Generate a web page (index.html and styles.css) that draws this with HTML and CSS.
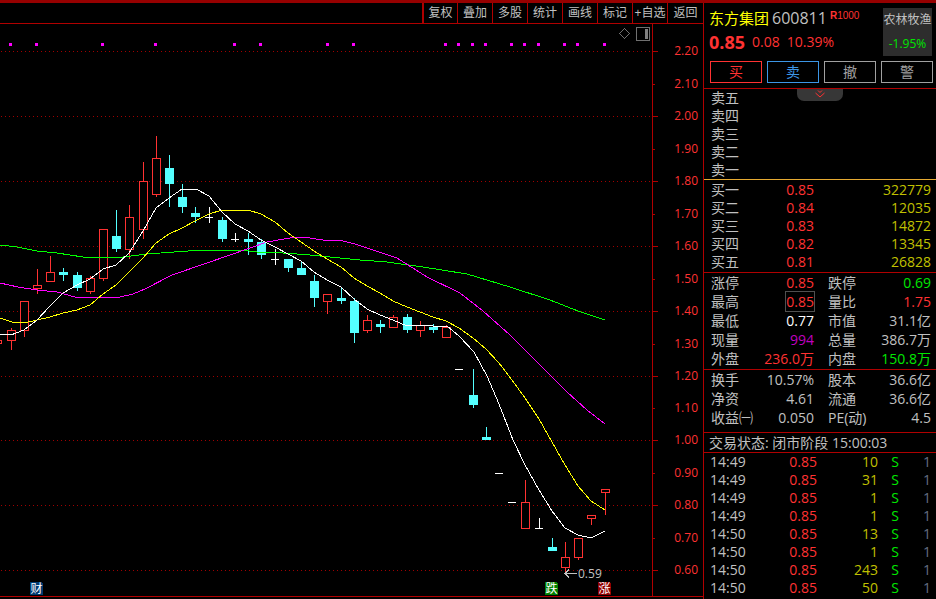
FILE: index.html
```html
<!DOCTYPE html>
<html lang="zh-CN">
<head>
    <meta charset="UTF-8">
    <meta name="viewport" content="width=device-width, initial-scale=1.0">
    <title>东方集团 600811</title>
    <link rel="stylesheet" href="styles.css">
</head>
<body>
    <main class="chart-panel">
        <nav class="toolbar">
            <button type="button">复权</button>
            <button type="button">叠加</button>
            <button type="button">多股</button>
            <button type="button">统计</button>
            <button type="button">画线</button>
            <button type="button">标记</button>
            <button type="button">+自选</button>
            <button type="button">返回</button>
        </nav>

        <svg class="chart" id="chart" viewBox="0 24 703 575" role="img" aria-label="日K线">
            <g id="grid"></g>
            <g id="signals" class="signal"></g>
            <g id="candles"></g>

            <!-- Moving averages -->
            <polyline class="ma ma-green" points="0,245 17,247 37,251 57,253 83,257 123,257 147,254 188,251 210,250 240,250 257,252 283,253 310,255 340,258 360,260 387,262 423,267 467,274 510,287 550,300 578,311 605,320"/>
            <polyline class="ma ma-pink" points="0,283 18,287 37,290 57,292 75,297 120,297 133,294 145,289 172,275 207,263 250,248 267,242 290,238 303,237 323,240 343,241 355,244 397,258 427,277 460,293 483,311 510,335 530,355 543,368 567,392 587,410 605,424"/>
            <polyline class="ma ma-yellow" points="0,318 12,322 24,323 37,320 50,317 63,313 77,310 90,305 103,294 116,285 129,272 143,258 156,243 169,234 182,228 195,221 209,214 222,210 235,211 248,210 261,214 275,222 288,233 301,242 314,251 327,259 341,267 354,278 367,286 380,293 393,301 407,307 420,312 433,317 446,321 459,328 473,338 486,349 499,363 512,380 525,398 539,419 552,442 565,465 578,486 591,501 605,510"/>
            <polyline class="ma ma-white" points="0,334 11,335 24,330 37,320 50,306 63,293 77,285 90,279 103,269 116,265 129,253 143,231 156,208 169,198 182,189 196,189 209,196 222,212 235,224 248,231 261,240 275,247 288,254 301,261 314,272 327,280 341,287 354,299 367,309 380,315 393,320 407,326 420,325 433,326 447,326 459,336 474,352 487,376 499,404 513,440 525,465 539,490 552,511 565,528 578,535 591,538 605,531"/>

            <!-- Axis and frame -->
            <path class="frame" d="M652.5 24V596M0 596.5H703"/>
            <g id="axis" class="axis-label"></g>

            <!-- Corner tools -->
            <path class="tool" d="M624.5 28.5L629.5 33.5L624.5 38.5L619.5 33.5Z"/>
            <rect class="tool" x="636.5" y="27.5" width="13" height="13"/>
            <rect class="tool-bar" x="645" y="29" width="3" height="10"/>

            <!-- Low price mark -->
            <path class="arrow" d="M577 573.5H565M569 569.5L565 573.5L569 577.5"/>
            <text class="low-price" x="578" y="578">0.59</text>

            <!-- Event badges -->
            <g class="badge">
                <path fill="#003a70" d="M30 582h11l2 2v11h-13z"/>
                <path fill="#008000" d="M545 582h11l2 2v11h-13z"/>
                <path fill="#900000" d="M598 582h11l2 2v11h-13z"/>
                <text x="36.5" y="593">财</text>
                <text x="551.5" y="593">跌</text>
                <text x="604.5" y="593">涨</text>
            </g>
        </svg>
    </main>

    <aside class="quote">
        <header class="stock">
            <div class="stock-info">
                <h1><span class="stock-name">东方集团</span> <span class="code">600811</span> <sup><b>R</b>1000</sup></h1>
                <p class="price-line"><strong>0.85</strong><span>0.08</span><span>10.39%</span></p>
            </div>
            <div class="sector">
                <a href="#">农林牧渔</a>
                <span class="down">-1.95%</span>
            </div>
        </header>
        <div class="actions">
            <button type="button" class="buy">买</button>
            <button type="button" class="sell">卖</button>
            <button type="button">撤</button>
            <button type="button">警</button>
        </div>

        <section class="asks">
            <button type="button" class="drawer" aria-label="展开">
                <svg width="10" height="8" viewBox="0 0 10 8"><path d="M3 0.5L5 2.5L7 0.5M0.5 3L5 7L9.5 3"/></svg>
            </button>
            <table class="book">
                <tr><th>卖五</th><td></td><td></td></tr>
                <tr><th>卖四</th><td></td><td></td></tr>
                <tr><th>卖三</th><td></td><td></td></tr>
                <tr><th>卖二</th><td></td><td></td></tr>
                <tr><th>卖一</th><td></td><td></td></tr>
            </table>
        </section>
        <section class="bids">
            <table class="book">
                <tr><th>买一</th><td class="up">0.85</td><td class="vol">322779</td></tr>
                <tr><th>买二</th><td class="up">0.84</td><td class="vol">12035</td></tr>
                <tr><th>买三</th><td class="up">0.83</td><td class="vol">14872</td></tr>
                <tr><th>买四</th><td class="up">0.82</td><td class="vol">13345</td></tr>
                <tr><th>买五</th><td class="up">0.81</td><td class="vol">26828</td></tr>
            </table>
        </section>

        <section class="stats-price">
            <table class="stats">
                <tr><th>涨停</th><td class="up">0.85</td><th>跌停</th><td class="down">0.69</td></tr>
                <tr><th>最高</th><td class="up"><span class="boxed">0.85</span></td><th>量比</th><td class="up">1.75</td></tr>
                <tr><th>最低</th><td class="flat">0.77</td><th>市值</th><td>31.1亿</td></tr>
                <tr><th>现量</th><td class="now">994</td><th>总量</th><td>386.7万</td></tr>
                <tr><th>外盘</th><td class="up">236.0万</td><th>内盘</th><td class="down">150.8万</td></tr>
            </table>
        </section>
        <section class="stats-base">
            <table class="stats">
                <tr><th>换手</th><td>10.57%</td><th>股本</th><td>36.6亿</td></tr>
                <tr><th>净资</th><td>4.61</td><th>流通</th><td>36.6亿</td></tr>
                <tr><th>收益㈠</th><td>0.050</td><th>PE(动)</th><td>4.5</td></tr>
            </table>
        </section>

        <p class="status">交易状态: 闭市阶段 15:00:03</p>

        <table class="tape">
            <tr><th>14:49</th><td class="up">0.85</td><td class="vol">10</td><td class="side">S</td><td class="count">1</td></tr>
            <tr><th>14:49</th><td class="up">0.85</td><td class="vol">31</td><td class="side">S</td><td class="count">1</td></tr>
            <tr><th>14:49</th><td class="up">0.85</td><td class="vol">1</td><td class="side">S</td><td class="count">1</td></tr>
            <tr><th>14:49</th><td class="up">0.85</td><td class="vol">1</td><td class="side">S</td><td class="count">1</td></tr>
            <tr><th>14:50</th><td class="up">0.85</td><td class="vol">13</td><td class="side">S</td><td class="count">1</td></tr>
            <tr><th>14:50</th><td class="up">0.85</td><td class="vol">1</td><td class="side">S</td><td class="count">1</td></tr>
            <tr><th>14:50</th><td class="up">0.85</td><td class="vol">243</td><td class="side">S</td><td class="count">1</td></tr>
            <tr><th>14:50</th><td class="up">0.85</td><td class="vol">50</td><td class="side">S</td><td class="count">1</td></tr>
        </table>
    </aside>

    <script src="chart.js"></script>
</body>
</html>
```
FILE: styles.css
```css
* {
    box-sizing: border-box;
}
body {
    display: flex;
    align-items: stretch;
    min-height: 100vh;
    margin: 0;
    border-top: 3px solid #960000;
    background-color: #000;
    color: #c0c0c0;
    font-family: "Open Sans", "Noto Sans CJK SC", sans-serif;
    font-size: 14px;
    line-height: 18px;
}
button {
    padding: 0;
    background: none;
    color: inherit;
    font: inherit;
    cursor: pointer;
}
h1, p {
    margin: 0;
    font-weight: normal;
}

/* Chart side */
.chart-panel {
    flex: 1;
    min-width: 0;
}
.toolbar {
    display: flex;
    justify-content: flex-end;
    height: 21px;
    border-bottom: 1px solid #b00000;
}
.toolbar button {
    width: 35px;
    border: 0;
    border-right: 1px solid #b00000;
    font-size: 12px;
    line-height: 20px;
    white-space: nowrap;
    overflow: hidden;
}
.toolbar button:first-child {
    width: 36px;
    border-left: 2px solid #b00000;
}
.toolbar button:last-child {
    border-right: 0;
}
.chart {
    display: block;
    width: 100%;
    height: auto;
    shape-rendering: crispEdges;
}
.grid-line {
    stroke: #a00000;
    stroke-dasharray: 1 3;
}
.frame, .tick {
    fill: none;
    stroke: #b00000;
}
.axis-label {
    fill: #ff3232;
    font-size: 12px;
    text-anchor: end;
}
.signal {
    fill: #ff00ff;
}
.red {
    fill: #000;
    stroke: #ff3232;
}
.cyan {
    fill: #54ffff;
    stroke: #54ffff;
}
.white {
    fill: none;
    stroke: #fff;
}
.ma {
    fill: none;
    stroke-width: 1;
}
.ma-white {
    stroke: #fff;
}
.ma-yellow {
    stroke: #ffff00;
}
.ma-pink {
    stroke: #ff00ff;
}
.ma-green {
    stroke: #00ff00;
}
.tool {
    fill: none;
    stroke: #707070;
}
.tool-bar {
    fill: #808080;
}
.arrow {
    fill: none;
    stroke: #c0c0c0;
}
.low-price {
    fill: #c0c0c0;
    font-size: 12px;
}
.badge text {
    fill: #fff;
    font-size: 12px;
    text-anchor: middle;
}

/* Quote side */
.quote {
    flex: none;
    width: 233px;
    border-left: 1px solid #b00000;
}
.up {
    color: #ff3232;
}
.down {
    color: #00e600;
}
.flat {
    color: #fff;
}
.now {
    color: #c000c0;
}
.vol {
    color: #c0c000;
}
.stock {
    display: flex;
    justify-content: space-between;
    padding: 5px 4px 5px 5px;
}
.stock h1 {
    display: flex;
    gap: 3px;
    font-size: 16px;
    line-height: 20px;
}
.stock-name {
    color: #ffff00;
    font-size: 15px;
}
.stock sup {
    color: #ff3232;
    font-family: "Liberation Sans Narrow", "Liberation Sans", sans-serif;
    font-size: 10px;
    line-height: 16px;
    vertical-align: top;
}
.price-line {
    display: flex;
    gap: 7px;
    padding-top: 4px;
    color: #ff3232;
    line-height: 20px;
}
.price-line strong {
    font-size: 18px;
}
.sector {
    display: flex;
    flex-direction: column;
    justify-content: space-between;
    width: 49px;
    height: 48px;
    padding: 3px 0;
    background-color: #2d2d2d;
    font-size: 12px;
    text-align: center;
}
.sector a {
    color: #c0c0c0;
    text-decoration: none;
}
.actions {
    display: flex;
    gap: 5px;
    padding: 0 3px 5px 6px;
    border-bottom: 1px solid #b00000;
}
.actions button {
    flex: 1;
    height: 22px;
    border: 1px solid #a0a0a0;
    color: #a0a0a0;
    line-height: 20px;
}
.actions .buy {
    border-color: #ff3232;
    color: #ff3232;
}
.actions .sell {
    border-color: #3c96e6;
    color: #3c96e6;
}

table {
    width: 100%;
    border-collapse: collapse;
    table-layout: fixed;
}
th, td {
    height: 18px;
    padding: 0;
    font-weight: normal;
    text-align: right;
    white-space: nowrap;
}
th {
    padding-left: 7px;
    text-align: left;
}
td:last-child {
    padding-right: 5px;
}
.asks {
    position: relative;
    border-bottom: 1px solid #e6aa32;
}
.drawer {
    position: absolute;
    top: 0;
    left: 40%;
    display: flex;
    justify-content: center;
    width: 46px;
    height: 12px;
    padding-top: 1px;
    border: 0;
    border-radius: 0 0 7px 7px;
    background-color: #373737;
}
.drawer path {
    fill: none;
    stroke: #ff3232;
}
.bids {
    padding: 1px 0;
    border-bottom: 1px solid #b00000;
}
.book th {
    width: 60px;
}
.book td:nth-child(2) {
    width: 50px;
}
.stats th, .stats td {
    height: 19px;
    line-height: 19px;
}
.stats th:first-child {
    width: 50px;
}
.stats td:nth-child(2) {
    width: 60px;
}
.stats th:nth-child(3) {
    width: 56px;
    padding-left: 14px;
}
.stats-price {
    padding-bottom: 1px;
    border-bottom: 1px solid #b00000;
}
.stats-base {
    padding-bottom: 5px;
    border-bottom: 1px solid #b00000;
}
.boxed {
    outline: 1px solid #505050;
}
.status {
    padding-left: 5px;
    border-bottom: 1px solid #b00000;
    line-height: 19px;
}
.tape th {
    width: 60px;
    padding-left: 6px;
}
.tape td:nth-child(2) {
    width: 53px;
}
.tape .side {
    width: 21px;
    color: #00e600;
}
.tape .count {
    width: 37px;
    color: #646e82;
}
```
FILE: chart.js
```javascript
const SVG_NS = 'http://www.w3.org/2000/svg';

// [price, y]
const levels = [
    ['2.20', 51], ['2.10', 84], ['2.00', 116], ['1.90', 149], ['1.80', 181],
    ['1.70', 214], ['1.60', 246], ['1.50', 279], ['1.40', 311], ['1.30', 344],
    ['1.20', 376], ['1.10', 408], ['1.00', 440], ['0.90', 473], ['0.80', 505],
    ['0.70', 538], ['0.60', 570]
];

const signals = [10, 36, 102, 155, 234, 260, 327, 353, 445, 458, 472, 485, 511, 524, 538, 564, 577, 604];

// [colour, x, high, body top, body bottom, low]
const candles = [
    ['red', -3, 340, 340, 343, 343],
    ['red', 11, 328, 330, 340, 350],
    ['red', 24, 301, 301, 330, 337],
    ['red', 37, 269, 285, 288, 294],
    ['red', 50, 256, 272, 281, 281],
    ['cyan', 63, 268, 272, 274, 281],
    ['cyan', 77, 272, 275, 287, 291],
    ['red', 90, 276, 278, 291, 294],
    ['red', 103, 229, 229, 278, 281],
    ['cyan', 116, 210, 236, 248, 252],
    ['red', 129, 205, 217, 249, 259],
    ['red', 143, 162, 181, 229, 239],
    ['red', 156, 136, 158, 194, 197],
    ['cyan', 169, 155, 168, 183, 207],
    ['cyan', 182, 184, 197, 206, 213],
    ['cyan', 195, 207, 213, 216, 223],
    ['white', 209, 207, 217, 217, 223],
    ['cyan', 222, 217, 220, 238, 242],
    ['white', 235, 233, 239, 239, 242],
    ['cyan', 248, 233, 239, 241, 255],
    ['cyan', 261, 239, 242, 254, 259],
    ['white', 275, 249, 259, 259, 265],
    ['cyan', 288, 259, 259, 267, 272],
    ['cyan', 301, 262, 268, 274, 274],
    ['cyan', 314, 275, 281, 297, 307],
    ['red', 327, 294, 294, 301, 314],
    ['cyan', 341, 287, 298, 300, 304],
    ['cyan', 354, 298, 301, 332, 343],
    ['red', 367, 315, 320, 330, 333],
    ['cyan', 380, 320, 324, 326, 333],
    ['red', 393, 315, 317, 327, 327],
    ['cyan', 407, 314, 317, 329, 333],
    ['red', 420, 321, 325, 330, 337],
    ['cyan', 433, 324, 327, 329, 333],
    ['red', 446, 325, 327, 337, 337],
    ['white', 459, 369, 369, 369, 369],
    ['cyan', 473, 369, 395, 404, 408],
    ['cyan', 486, 427, 437, 439, 439],
    ['white', 499, 473, 473, 473, 473],
    ['white', 512, 502, 502, 502, 502],
    ['red', 525, 480, 502, 528, 528],
    ['white', 539, 518, 528, 528, 528],
    ['cyan', 552, 538, 547, 550, 550],
    ['red', 565, 542, 557, 567, 572],
    ['red', 578, 538, 538, 557, 560],
    ['red', 591, 515, 515, 518, 525],
    ['red', 605, 489, 489, 492, 515]
];

function add(parent, tag, attrs, text) {
    const el = document.createElementNS(SVG_NS, tag);
    for (const key in attrs) {
        el.setAttribute(key, attrs[key]);
    }
    if (text) {
        el.textContent = text;
    }
    document.getElementById(parent).appendChild(el);
}

levels.forEach(function ([price, y], i) {
    const major = i % 2 === 0;
    if (major) {
        add('grid', 'path', { class: 'grid-line', d: `M1 ${y + 0.5}H652` });
    }
    add('axis', 'path', { class: 'tick', d: `M653 ${y + 0.5}h${major ? 5 : 2}` });
    add('axis', 'text', { x: 698, y: y + 4 }, price);
});

signals.forEach(function (x) {
    add('signals', 'rect', { x: x - 1, y: 43, width: 3, height: 3 });
});

candles.forEach(function ([color, x, high, top, bottom, low]) {
    const c = x + 0.5;
    if (color === 'white') {
        add('candles', 'path', { class: color, d: `M${x - 4} ${top + 0.5}h8` });
        if (low > high) {
            add('candles', 'path', { class: color, d: `M${c} ${high}V${low}` });
        }
        return;
    }
    add('candles', 'path', { class: color, d: `M${c} ${high}V${low}` });
    add('candles', 'rect', { class: color, x: x - 3.5, y: top + 0.5, width: 8, height: bottom - top });
});
```
